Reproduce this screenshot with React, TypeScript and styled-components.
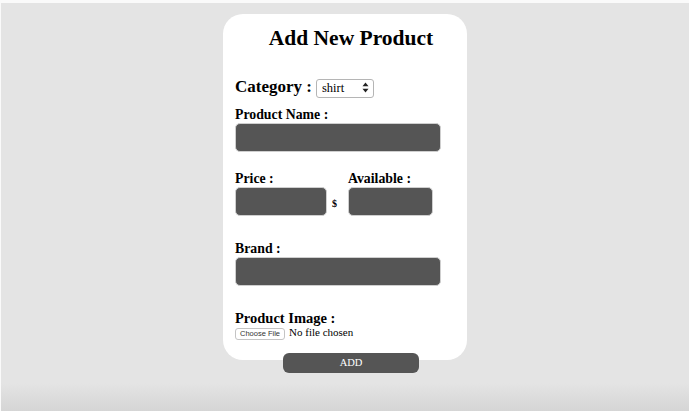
import React from 'react';
import styled, { createGlobalStyle } from 'styled-components';

const GlobalStyle = createGlobalStyle`
  html, body {
    margin: 0;
    padding: 0;
    background: #fafafa;
  }
  body {
    font-family: 'Liberation Serif', 'Times New Roman', serif;
    color: #000;
  }
`;

const Page = styled.div`
  margin: 3px 0 0 1px;
  height: 408px;
  box-sizing: border-box;
  padding-top: 11px;
  display: flex;
  flex-direction: column;
  align-items: center;
  background: linear-gradient(to bottom, #e4e4e4 0, #e4e4e4 380px, #d5d5d5 408px);
`;

const Card = styled.form`
  width: 244px;
  height: 346px;
  box-sizing: border-box;
  padding: 12px 0 0 12px;
  background: #fff;
  border-radius: 20px;
  display: flex;
  flex-direction: column;
  & > * {
    flex-shrink: 0;
  }
`;

const Title = styled.h2`
  margin: 0;
  font-size: 21.5px;
  line-height: 25px;
  font-weight: bold;
  text-align: center;
`;

const CategoryRow = styled.div`
  display: flex;
  align-items: baseline;
  gap: 4px;
  margin-top: 26px;
`;

const CategoryLabel = styled.label`
  font-size: 17px;
  line-height: 20px;
  font-weight: bold;
`;

const SelectWrap = styled.span`
  position: relative;
  display: inline-block;
`;

const Select = styled.select`
  appearance: none;
  width: 58px;
  height: 19px;
  box-sizing: border-box;
  padding: 0 0 0 5px;
  border: 1px solid #b5b5b5;
  border-radius: 3px;
  background: #fff;
  font-family: 'Liberation Serif', serif;
  font-size: 12.5px;
  color: #000;
`;

const Arrows = styled.svg`
  position: absolute;
  right: 5px;
  top: 4px;
  pointer-events: none;
`;

const FieldLabel = styled.label<{ $size?: number; $gap?: number }>`
  display: block;
  font-size: ${(p) => p.$size || 13.8}px;
  line-height: 16px;
  font-weight: bold;
  margin-top: ${(p) => p.$gap ?? 19}px;
`;

const TextField = styled.input<{ $width: number }>`
  display: block;
  flex-shrink: 0;
  width: ${(p) => p.$width}px;
  height: 29px;
  box-sizing: border-box;
  border: 1px solid #cfcfcf;
  border-radius: 5px;
  background: #555;
  color: #fff;
  outline: none;
`;

const PairRow = styled.div`
  display: flex;
`;

const Column = styled.div<{ $width: number }>`
  width: ${(p) => p.$width}px;
`;

const PriceLine = styled.div`
  display: flex;
  align-items: flex-end;
`;

const Currency = styled.span`
  font-size: 10px;
  font-weight: bold;
  margin: 0 0 7px 5px;
`;

const FileInput = styled.input`
  display: block;
  margin-top: 0;
  font-family: 'Liberation Serif', serif;
  font-size: 11px;
  line-height: 13px;
  &::file-selector-button {
    font-family: 'Liberation Sans', Arial, sans-serif;
    font-size: 7.5px;
    height: 12px;
    padding: 0 4px;
    margin-right: 4px;
    border: 1px solid #c4c4c4;
    border-radius: 3px;
    background: #fff;
    color: #333;
  }
`;

const AddButton = styled.button`
  align-self: center;
  width: 136px;
  height: 20px;
  margin-top: 13px;
  border: none;
  border-radius: 6px;
  background: #555;
  color: #fff;
  font-family: 'Liberation Serif', serif;
  font-size: 10.5px;
  padding: 0;
`;

export default function App(): JSX.Element {
  return (
    <>
      <GlobalStyle />
      <Page>
        <Card onSubmit={(e) => e.preventDefault()}>
          <Title>Add New Product</Title>
          <CategoryRow>
            <CategoryLabel>Category :</CategoryLabel>
            <SelectWrap>
              <Select defaultValue="shirt">
                <option value="shirt">shirt</option>
                <option value="pants">pants</option>
                <option value="shoes">shoes</option>
              </Select>
              <Arrows width="7" height="11" viewBox="0 0 7 11">
                <path d="M3.5 0.5 L6.5 4.3 L0.5 4.3 Z" fill="#222" />
                <path d="M3.5 10.5 L6.5 6.7 L0.5 6.7 Z" fill="#222" />
              </Arrows>
            </SelectWrap>
          </CategoryRow>

          <FieldLabel $gap={9}>Product Name :</FieldLabel>
          <TextField $width={206} />

          <PairRow>
            <Column $width={113}>
              <FieldLabel>Price :</FieldLabel>
              <PriceLine>
                <TextField $width={92} />
                <Currency>$</Currency>
              </PriceLine>
            </Column>
            <Column $width={90}>
              <FieldLabel>Available :</FieldLabel>
              <TextField $width={85} />
            </Column>
          </PairRow>

          <FieldLabel $gap={25}>Brand :</FieldLabel>
          <TextField $width={206} />

          <FieldLabel $size={14.5} $gap={24.9}>Product Image :</FieldLabel>
          <FileInput type="file" />

          <AddButton type="submit">ADD</AddButton>
        </Card>
      </Page>
    </>
  );
}
